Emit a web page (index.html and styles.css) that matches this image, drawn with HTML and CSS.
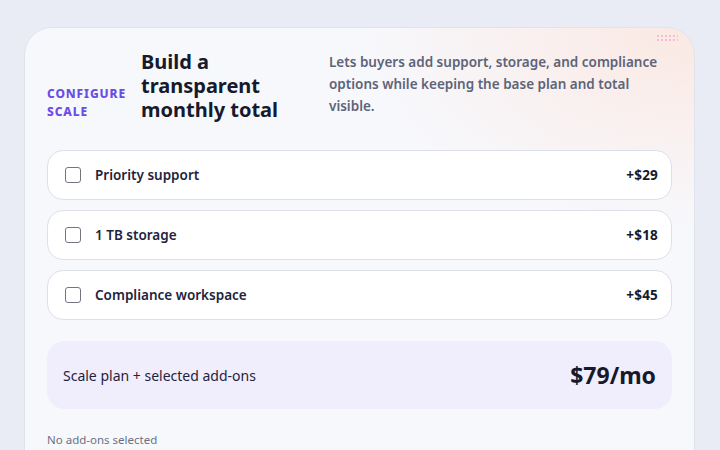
FILE: index.html
```html
<!DOCTYPE html>
<html>
<head>
  <title>Configure Scale</title>
  <meta name="viewport" content="width=device-width, initial-scale=1.0" />
  <link rel="stylesheet" href="styles.css">
</head>
<body>
  <div class="card">
    <div class="dots"></div>
    <div class="head">
      <div class="eyebrow">Configure<br>scale</div>
      <h1>Build a transparent monthly total</h1>
      <p class="desc">Lets buyers add support, storage, and compliance options while keeping the base plan and total visible.</p>
    </div>

    <div class="options">
      <label class="option">
        <span class="box"></span>
        <span class="name">Priority support</span>
        <span class="price">+$29</span>
      </label>
      <label class="option">
        <span class="box"></span>
        <span class="name">1 TB storage</span>
        <span class="price">+$18</span>
      </label>
      <label class="option">
        <span class="box"></span>
        <span class="name">Compliance workspace</span>
        <span class="price">+$45</span>
      </label>
    </div>

    <div class="summary">
      <span>Scale plan + selected add-ons</span>
      <strong>$79/mo</strong>
    </div>
    <p class="note">No add-ons selected</p>
  </div>
</body>
</html>
```

FILE: styles.css
```css
body { margin: 0; background: #e9ecf4; font-family: "Noto Sans", sans-serif; color: #1b2036; overflow: hidden; }
.card {
  position: relative;
  margin: 27px 25px 0 24px;
  padding: 22px 22px 0 22px;
  border: 1px solid #dfe3ec;
  border-radius: 28px;
  background:
    radial-gradient(ellipse 330px 200px at 100% 0%, #fbe8e2 0%, rgba(251,232,226,0.55) 45%, rgba(247,248,252,0) 100%),
    #f7f8fc;
  height: 450px;
}
.dots {
  position: absolute; top: 6px; right: 16px; width: 22px; height: 8px;
  background-image: radial-gradient(circle, #f5bcd6 0.9px, transparent 1.3px);
  background-size: 4px 4px;
}
.head { display: grid; grid-template-columns: 78px 172px 1fr; column-gap: 16px; }
.eyebrow {
  align-self: end;
  margin-bottom: 1px;
  font-size: 12px; font-weight: 800; letter-spacing: 0.9px; line-height: 18px;
  text-transform: uppercase; color: #6a4de6;
  white-space: nowrap;
}
h1 { margin: 0; font-size: 20px; line-height: 24px; font-weight: 700; color: #151a2d; }
.desc { margin: 1px 0 0; font-size: 13.5px; line-height: 22px; font-weight: 600; color: #5d6478; }
.options { display: flex; flex-direction: column; gap: 10px; margin-top: 28px; }
.option {
  display: flex; align-items: center; height: 48px; padding: 0 13px 0 17px;
  background: #fff; border: 1px solid #dde0ea; border-radius: 16px;
}
.box { width: 14px; height: 14px; border: 1px solid #77737f; border-radius: 3px; margin-right: 14px; }
.name { flex: 1; font-size: 13.5px; font-weight: 600; color: #1e2440; }
.price { font-size: 13.5px; font-weight: 700; color: #151a2d; letter-spacing: 0.2px; }
.summary {
  display: flex; align-items: center; justify-content: space-between;
  margin-top: 21px; height: 68px; padding: 0 16px;
  background: #f0edfc; border-radius: 18px;
  font-size: 14px; color: #1e2440;
}
.summary strong { font-size: 23px; font-weight: 700; color: #151a2d; }
.note { margin: 23px 0 0; font-size: 11.5px; color: #6b7080; }
```
